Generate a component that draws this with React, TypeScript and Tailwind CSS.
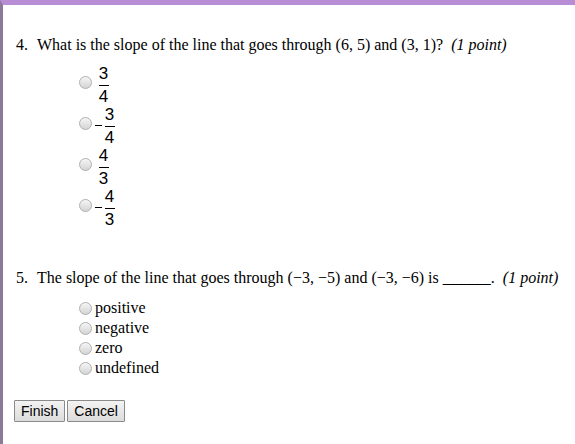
import React from "react";

function Radio() {
  return (
    <span className="inline-block shrink-0 w-[13px] h-[13px] rounded-full border border-[#b0b0b0] bg-gradient-to-b from-[#f6f6f6] to-[#d4d4d4]" />
  );
}

function Frac({ n, d, neg }: { n: string; d: string; neg?: boolean }) {
  return (
    <div className="flex items-center h-[41px]">
      <Radio />
      {neg ? (
        <span className="block w-[7px] h-[1px] bg-black ml-[3px] mt-[4px]" />
      ) : null}
      <span
        className={
          "flex flex-col items-center text-[17px] leading-[13px] mt-[4px] w-[11px] " +
          (neg ? "ml-[2px]" : "ml-[6px]")
        }
        style={{ fontFamily: "Arial, 'Liberation Sans', sans-serif" }}
      >
        <span>{n}</span>
        <span className="block w-[10px] h-[1px] bg-black mt-[5px] mb-[4px]" />
        <span>{d}</span>
      </span>
    </div>
  );
}

function TextOpt({ label }: { label: string }) {
  return (
    <div className="flex items-center h-[20px]">
      <Radio />
      <span className="ml-[3px]">{label}</span>
    </div>
  );
}

export default function App() {
  return (
    <div
      className="w-[575px] h-[444px] bg-white border-t-[5px] border-t-[#b88dd5] border-l-[3px] border-l-[#8c7b98] overflow-hidden text-black text-[16px]"
      style={{ fontFamily: "'Liberation Serif', 'Times New Roman', serif" }}
    >
      <div className="pt-[31px] pl-[13px]">
        <div className="flex leading-[18px]">
          <span className="w-[21px]">4.</span>
          <span>
            What is the slope of the line that goes through (6, 5) and (3, 1)?
            <span className="ml-[8px] italic">(1 point)</span>
          </span>
        </div>
        <div className="pl-[63px] pt-[8px] flex flex-col">
          <Frac n="3" d="4" />
          <Frac n="3" d="4" neg />
          <Frac n="4" d="3" />
          <Frac n="4" d="3" neg />
        </div>
        <div className="flex leading-[18px] mt-[43px]">
          <span className="w-[21px]">5.</span>
          <span>
            The slope of the line that goes through (−3, −5) and (−3, −6) is ______.
            <span className="ml-[8px] italic">(1 point)</span>
          </span>
        </div>
        <div className="pl-[63px] pt-[11px] flex flex-col">
          <TextOpt label="positive" />
          <TextOpt label="negative" />
          <TextOpt label="zero" />
          <TextOpt label="undefined" />
        </div>
        <div className="flex mt-[22px] -ml-[2px]" style={{ fontFamily: "Arial, 'Liberation Sans', sans-serif" }}>
          <button className="h-[22px] px-[6px] text-[14px] leading-[20px] border border-[#8a8a8a] bg-gradient-to-b from-[#f3f3f3] to-[#dcdcdc] rounded-[1px]">
            Finish
          </button>
          <button className="h-[22px] ml-[2px] px-[6px] text-[14px] leading-[20px] border border-[#8a8a8a] bg-gradient-to-b from-[#f3f3f3] to-[#dcdcdc] rounded-[1px]">
            Cancel
          </button>
        </div>
      </div>
    </div>
  );
}
